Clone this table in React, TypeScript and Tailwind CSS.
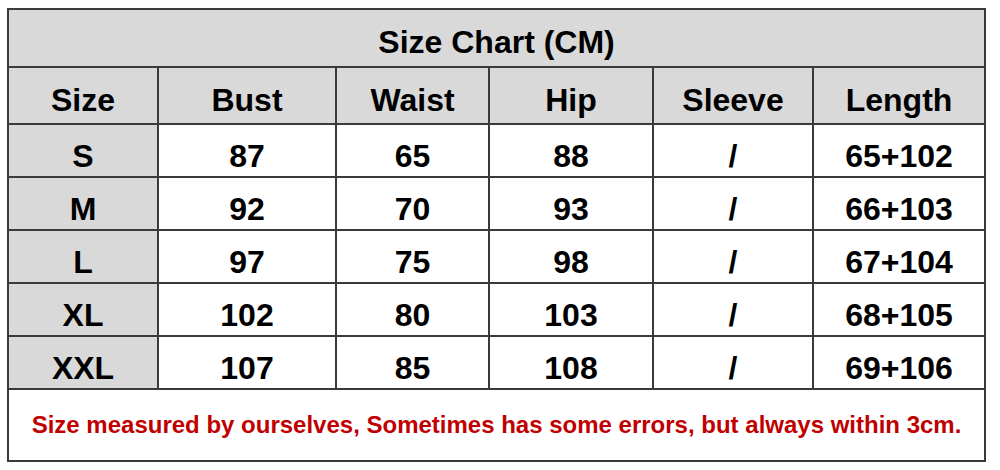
const headers = ['Size', 'Bust', 'Waist', 'Hip', 'Sleeve', 'Length']

const rows = [
  ['S', '87', '65', '88', '/', '65+102'],
  ['M', '92', '70', '93', '/', '66+103'],
  ['L', '97', '75', '98', '/', '67+104'],
  ['XL', '102', '80', '103', '/', '68+105'],
  ['XXL', '107', '85', '108', '/', '69+106'],
]

const colWidths = ['w-[150px]', 'w-[178px]', 'w-[153px]', 'w-[164px]', 'w-[160px]', 'w-[172px]']

export default function App() {
  return (
    <div className="w-[1000px] h-[470px] bg-white pl-[7px] pt-[8px] font-['Liberation_Sans',Arial,sans-serif] font-bold text-black">
      <table className="border-collapse table-fixed w-[978px]">
        <colgroup>
          {colWidths.map((w, i) => (
            <col key={i} className={w} />
          ))}
        </colgroup>
        <tbody>
          {/* Title */}
          <tr className="h-[58px]">
            <td colSpan={6} className="border-2 border-[#3a3a3a] bg-[#d9d9d9] pt-[8px] text-center text-[32px] leading-none">
              Size Chart (CM)
            </td>
          </tr>
          {/* Column headers */}
          <tr className="h-[57px]">
            {headers.map((h) => (
              <td key={h} className="border-2 border-[#3a3a3a] bg-[#d9d9d9] pt-[8px] text-center text-[32px] leading-none">
                {h}
              </td>
            ))}
          </tr>
          {rows.map((row) => (
            <tr key={row[0]} className="h-[53px]">
              {row.map((cell, i) => (
                <td
                  key={i}
                  className={
                    'border-2 border-[#3a3a3a] pt-[10px] text-center text-[32px] leading-none ' +
                    (i === 0 ? 'bg-[#d9d9d9]' : 'bg-white')
                  }
                >
                  {cell}
                </td>
              ))}
            </tr>
          ))}
          {/* Note */}
          <tr className="h-[72px]">
            <td colSpan={6} className="border-2 border-[#3a3a3a] bg-white text-center text-[24px] leading-none text-[#c00000]">
              Size measured by ourselves, Sometimes has some errors, but always within 3cm.
            </td>
          </tr>
        </tbody>
      </table>
    </div>
  )
}
